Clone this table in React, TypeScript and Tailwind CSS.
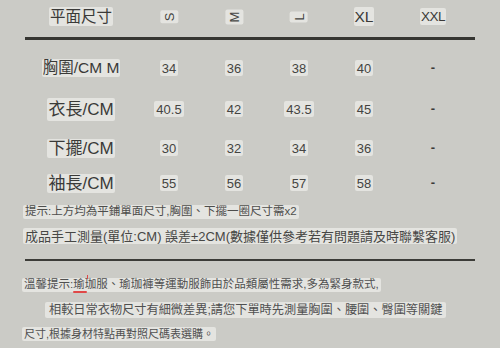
import React from "react";

const FONT = { fontFamily: '"Liberation Sans", "Noto Sans CJK TC", sans-serif' };

const cols = ["w-[112px]", "w-[64px]", "w-[66px]", "w-[64px]", "w-[66px]", "w-[72px]"];

function Chip({ children, className = "" }: { children: React.ReactNode; className?: string }) {
  return <span className={`bg-[#e4e4e0] rounded-[2px] leading-none whitespace-nowrap ${className}`}>{children}</span>;
}

type Row = { label: string; size: string; h: string; values: string[] };

const rows: Row[] = [
  { label: "胸圍/CM M", size: "text-[15.5px]", h: "h-[38px]", values: ["34", "36", "38", "40"] },
  { label: "衣長/CM", size: "text-[17px] py-[3px]", h: "h-[44px]", values: ["40.5", "42", "43.5", "45"] },
  { label: "下擺/CM", size: "text-[17px] py-[1px]", h: "h-[34px]", values: ["30", "32", "34", "36"] },
  { label: "袖長/CM", size: "text-[17px] py-[1px]", h: "h-[36px]", values: ["55", "56", "57", "58"] },
];

export default function App() {
  return (
    <div className="w-[500px] h-[348px] bg-[#cbcbc6] text-[#3a3a38] overflow-hidden pl-[25px]" style={FONT}>
      <div className="w-[450px] flex flex-col">
        {/* header */}
        <div className="flex items-center h-[33px]">
          <div className={`${cols[0]} flex justify-center`}>
            <Chip className="text-[15.5px] px-[1px] py-[2px]">平面尺寸</Chip>
          </div>
          {["S", "M", "L"].map((s, i) => (
            <div key={s} className={`${cols[i + 1]} flex justify-center`}>
              <Chip className="text-[13px] px-[2px] py-[2.5px] -rotate-90 inline-block text-[#444442]">{s}</Chip>
            </div>
          ))}
          <div className={`${cols[4]} flex justify-center`}>
            <Chip className="text-[15.5px] px-[1px] py-[2px]">XL</Chip>
          </div>
          <div className={`${cols[5]} flex justify-center`}>
            <Chip className="text-[13.5px] px-[1px] py-[1.5px] tracking-[-0.5px]">XXL</Chip>
          </div>
        </div>
        <div className="h-[3px] mt-[4px] bg-[#363632]" />

        <div className="pt-[9px] flex flex-col">
          {rows.map((r) => (
            <div key={r.label} className={`flex items-center ${r.h}`}>
              <div className={`${cols[0]} flex justify-center`}>
                <Chip className={`${r.size} px-[1px] py-[1px]`}>{r.label}</Chip>
              </div>
              {r.values.map((v, i) => (
                <div key={i} className={`${cols[i + 1]} flex justify-center`}>
                  <Chip className="text-[13px] px-[2px] py-[1.5px] text-[#444442]">{v}</Chip>
                </div>
              ))}
              <div className={`${cols[5]} flex justify-center text-[13px] font-bold text-[#3a3a38]`}>-</div>
            </div>
          ))}
        </div>

        {/* notes */}
        <div className="h-[22px] flex items-center">
          <Chip className="text-[11.5px] px-[2px] py-[1px] text-[#4e4e4c] -ml-[2px]">提示:上方均為平鋪單面尺寸,胸圍、下擺一圈尺寸需x2</Chip>
        </div>
        <div className="h-[26px] flex items-center">
          <Chip className="text-[13px] px-[2px] py-[1.5px] text-[#474745] -ml-[2px]">成品手工測量(單位:CM) 誤差±2CM(數據僅供參考若有問題請及時聯繫客服)</Chip>
        </div>
        <div className="h-[2px] mt-[10px] bg-[#3c3c38]" />

        <div className="h-[10px]" />
        <div className="h-[28px] flex items-center relative">
          <Chip className="text-[11.5px] px-[2px] py-[1.5px] text-[#505050] -ml-[3px]">溫馨提示:瑜珈服、瑜珈褲等運動服飾由於品類屬性需求,多為緊身款式,</Chip>
          <span className="absolute left-[48px] top-[20px] w-[14px] h-[1.5px] bg-[#e04848] rounded-full" />
          <span className="absolute left-[62px] top-[4px] w-[1px] h-[4px] bg-[#e04848]" />
        </div>
        <div className="h-[22px] flex items-center pl-[20px]">
          <Chip className="text-[12.2px] px-[4px] py-[1.5px] text-[#505050]">相較日常衣物尺寸有細微差異;請您下單時先測量胸圍、腰圍、臀圍等關鍵</Chip>
        </div>
        <div className="h-[26px] flex items-center">
          <Chip className="text-[11px] px-[2px] py-[1.5px] text-[#505050] -ml-[3px]">尺寸,根據身材特點再對照尺碼表選購。</Chip>
        </div>
      </div>
    </div>
  );
}
